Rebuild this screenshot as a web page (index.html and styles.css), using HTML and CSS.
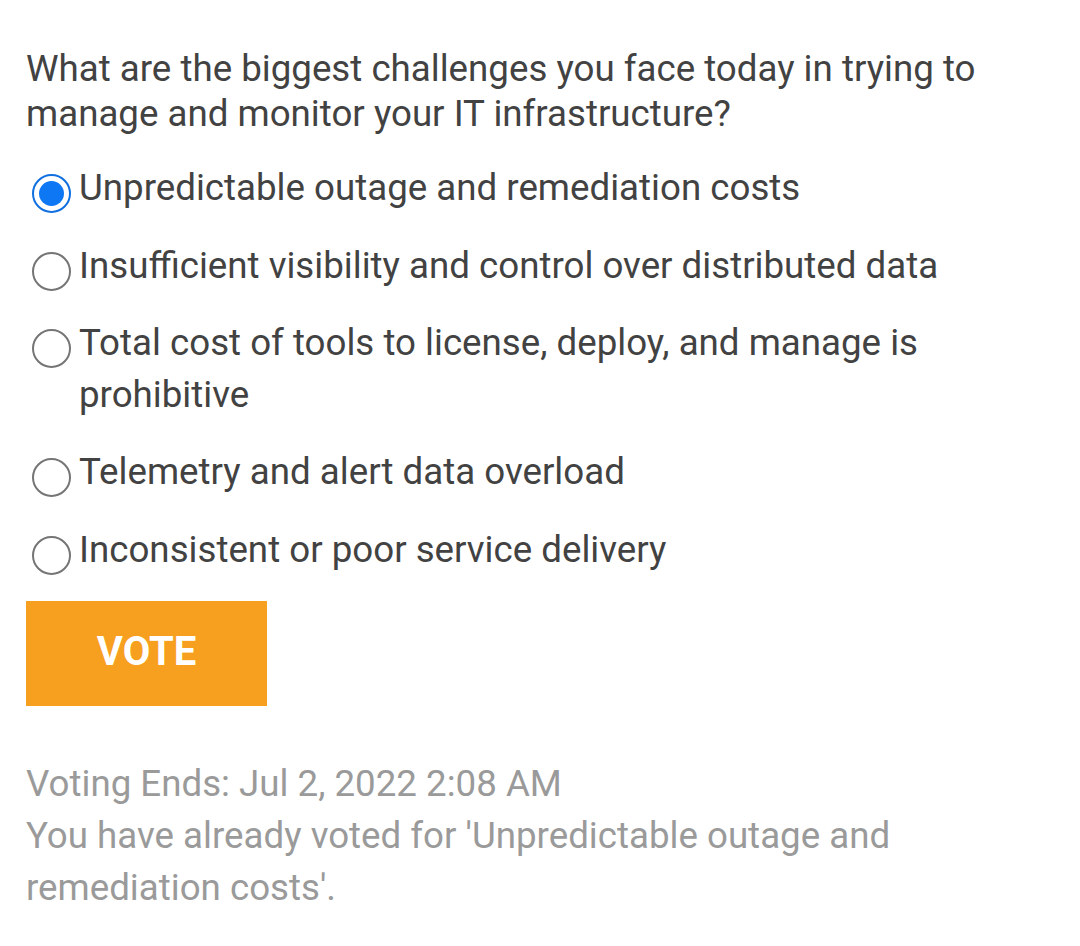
FILE: index.html
```html
<!DOCTYPE html>
<html lang="en">
<head>
<meta charset="utf-8">
<title>Poll</title>
<link rel="stylesheet" href="styles.css">
</head>
<body>
<div class="poll">
  <p class="question">What are the biggest challenges you face today in trying to manage and monitor your IT infrastructure?</p>
  <ul class="options">
    <li class="option"><span class="radio checked"></span><span class="label">Unpredictable outage and remediation costs</span></li>
    <li class="option"><span class="radio"></span><span class="label">Insufficient visibility and control over distributed data</span></li>
    <li class="option"><span class="radio"></span><span class="label">Total cost of tools to license, deploy, and manage is prohibitive</span></li>
    <li class="option"><span class="radio"></span><span class="label">Telemetry and alert data overload</span></li>
    <li class="option"><span class="radio"></span><span class="label">Inconsistent or poor service delivery</span></li>
  </ul>
  <button class="vote" type="button">VOTE</button>
  <div class="info">
    <p>Voting Ends: Jul 2, 2022 2:08 AM</p>
    <p>You have already voted for 'Unpredictable outage and remediation costs'.</p>
  </div>
</div>
</body>
</html>
```
FILE: styles.css
```css
html, body {
  margin: 0;
  padding: 0;
  background: #ffffff;
}
body {
  font-family: Roboto, "Noto Sans", sans-serif;
}
.poll {
  padding: 46px 80px 0 26px;
}
.question {
  margin: 0;
  font-size: 36.7px;
  line-height: 45px;
  color: #424242;
}
.options {
  list-style: none;
  margin: 26px 0 0 0;
  padding: 0;
}
.option {
  display: flex;
  align-items: flex-start;
  margin-bottom: 26px;
  font-size: 36.7px;
  line-height: 51.5px;
  color: #424242;
}
.radio {
  flex: none;
  width: 35px;
  height: 35px;
  border: 2.5px solid #757575;
  border-radius: 50%;
  margin: 12px 8px 0 6px;
  position: relative;
  box-sizing: content-box;
}
.radio.checked {
  border-color: #1070e0;
}
.radio.checked::after {
  content: "";
  position: absolute;
  left: 5px;
  top: 5px;
  width: 25px;
  height: 25px;
  border-radius: 50%;
  background: #0d77f4;
}
.label {
  flex: 1;
}
.vote {
  display: block;
  margin-top: 2px;
  width: 241px;
  height: 105px;
  border: none;
  background: #f7a020;
  color: #ffffff;
  font-family: Roboto, "Noto Sans", sans-serif;
  font-weight: bold;
  font-size: 40px;
  padding: 0 0 4px 0;
}
.info {
  margin-top: 51.5px;
  font-size: 36.7px;
  line-height: 52px;
  color: #9a9a9a;
}
.info p {
  margin: 0;
}
```
